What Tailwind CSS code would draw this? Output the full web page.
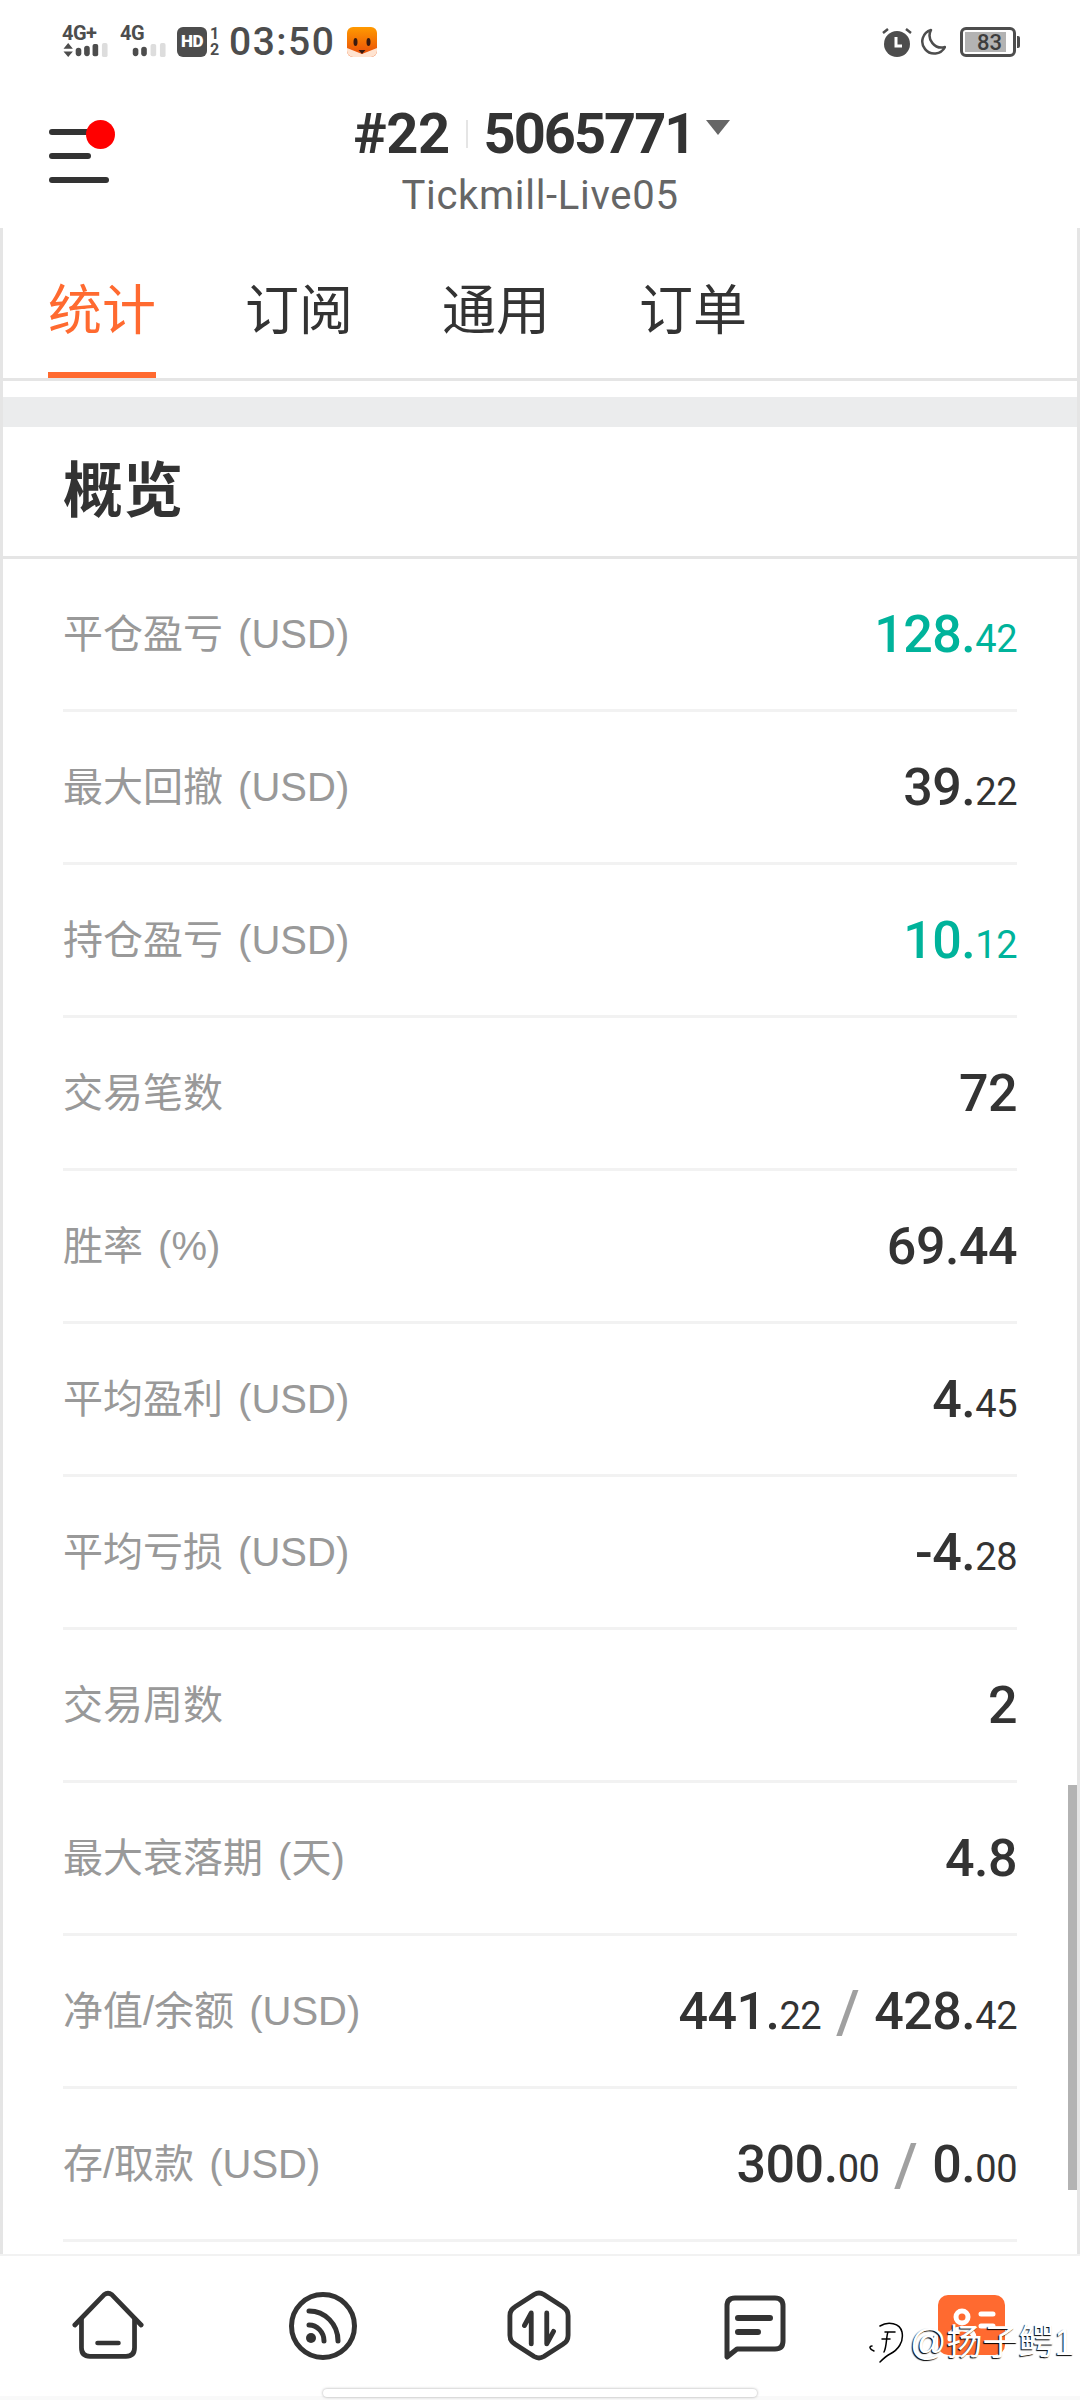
<!DOCTYPE html>
<html lang="zh-CN">
<head>
	<meta charset="UTF-8">
	<meta name="viewport" content="width=device-width, initial-scale=1.0">
	<title>概览</title>
	<script src="https://cdn.jsdelivr.net/npm/@tailwindcss/browser@4"></script>
</head>
<body class="bg-white">
<div class="relative w-[1080px] h-[2400px] overflow-hidden flex flex-col bg-white text-[#333] font-['Roboto','Noto_Sans_CJK_SC',sans-serif]">

	<!-- status bar -->
	<div class="h-[70px] shrink-0 flex items-start justify-between pl-[62px] pr-[60px] pt-[24px] text-[#4d4d4d]">
		<div class="flex items-start">
			<div class="w-[48px] h-[34px] flex flex-col">
				<span class="text-[20px] leading-[18px] font-bold tracking-[-0.5px]">4G+</span>
				<svg class="mt-[1px]" width="48" height="16" viewBox="0 0 48 16"><path d="M0 6 5 0l5 6zM0 9h10l-5 6z" fill="#4d4d4d"/><rect x="13" y="5" width="6" height="9" rx="3" fill="#4d4d4d"/><rect x="22" y="3" width="6" height="11" rx="3" fill="#4d4d4d"/><rect x="31" y="1" width="6" height="13" rx="2" fill="#4d4d4d"/><rect x="41" y="0" width="6" height="15" rx="2" fill="#ddd"/></svg>
			</div>
			<div class="ml-[10px] w-[48px] h-[34px] flex flex-col">
				<span class="text-[20px] leading-[18px] font-bold tracking-[-0.5px]">4G</span>
				<svg class="mt-[1px]" width="48" height="16" viewBox="0 0 48 16"><rect x="12" y="5" width="6" height="9" rx="3" fill="#4d4d4d"/><rect x="21" y="4" width="6" height="10" rx="3" fill="#4d4d4d"/><rect x="31" y="1" width="6" height="13" rx="2" fill="#ddd"/><rect x="41" y="0" width="6" height="15" rx="2" fill="#ddd"/></svg>
			</div>
			<div class="ml-[9px] mt-[3px] w-[30px] h-[30px] rounded-[6px] bg-[#4d4d4d] text-white text-[17px] font-black flex items-center justify-center tracking-[-0.5px]">HD</div>
			<div class="ml-[2px] mt-[2px] w-[11px] flex flex-col items-center text-[16px] leading-[16px] font-bold"><span>1</span><span>2</span></div>
			<span class="ml-[9px] text-[39px] leading-[38px] mt-[-1px] font-medium tracking-[1.5px]">03:50</span>
			<svg class="ml-[12px] mt-[3px]" width="30" height="30" viewBox="0 0 30 30">
				<defs><linearGradient id="fox" x1="0" y1="0" x2="0" y2="1"><stop offset="0" stop-color="#ff9a00"/><stop offset="1" stop-color="#e8480a"/></linearGradient></defs>
				<rect width="30" height="30" rx="6" fill="url(#fox)"/>
				<path d="M0 21 15 27 30 21v3a6 6 0 0 1-6 6H6a6 6 0 0 1-6-6z" fill="#ffe3d0"/>
				<ellipse cx="8.500" cy="15" rx="2" ry="4" fill="#3a1a10"/><ellipse cx="21.500" cy="15" rx="2" ry="4" fill="#3a1a10"/>
				<path d="M11.500 23h7L15 27z" fill="#3a1a10"/>
			</svg>
		</div>
		<div class="flex items-start -ml-[6px] mr-[4px]">
			<svg class="mt-[3px]" width="30" height="30" viewBox="0 0 30 30"><circle cx="15" cy="17" r="13" fill="#4d4d4d"/><path d="M1 6l5-4M29 6l-5-4" stroke="#4d4d4d" stroke-width="2.500"/><path d="M14 10v9h6" stroke="#fff" stroke-width="3" fill="none"/></svg>
			<svg class="ml-[6px] mt-[4px]" width="28" height="28" viewBox="0 0 28 28"><path d="M13 2A12 12 0 1 0 27 19 12 12 0 0 1 13 2z" fill="none" stroke="#4d4d4d" stroke-width="2.500" stroke-linejoin="round"/></svg>
			<div class="ml-[14px] mt-[3px] relative w-[56px] h-[30px] rounded-[6px] border-[3px] border-[#4d4d4d] p-[2px]">
				<div class="w-[41px] h-full bg-[#b3b3b3]"></div>
				<span class="absolute inset-0 flex items-center justify-end pr-[11px] text-[22px] font-medium text-[#3d3d3d]">83</span>
				<div class="absolute right-[-7px] top-[6px] w-[3px] h-[12px] bg-[#4d4d4d] rounded-r-[2px]"></div>
			</div>
		</div>
	</div>

	<!-- title bar -->
	<div class="relative h-[158px] shrink-0">
		<div class="absolute left-[49px] top-[59px] flex flex-col gap-[18px]">
			<div class="w-[56px] h-[6px] rounded-full bg-[#333]"></div>
			<div class="w-[42px] h-[6px] rounded-full bg-[#333]"></div>
			<div class="w-[60px] h-[6px] rounded-full bg-[#333]"></div>
		</div>
		<div class="absolute left-[86px] top-[50px] w-[29px] h-[29px] rounded-full bg-[#ff0000]"></div>
		<div class="flex flex-col items-center pt-[34px]">
			<div class="flex items-center h-[60px] leading-[60px] pl-[4px]">
				<span class="text-[56px] font-bold tracking-[-0.5px]">#22</span>
				<span class="w-[2px] h-[28px] bg-[#e5e5e5] mx-[16px]"></span>
				<span class="text-[56px] font-bold tracking-[-2px]">5065771</span>
				<svg class="ml-[12px] mt-[-14px]" width="24" height="15" viewBox="0 0 24 15"><path d="M0 0h24L12 15z" fill="#666"/></svg>
			</div>
			<span class="mt-[10px] text-[40px] leading-[44px] tracking-[0.7px] text-[#666]">Tickmill-Live05</span>
		</div>
	</div>

	<!-- scroll area -->
	<div class="relative flex-1 min-h-0 flex flex-col border-x-[3px] border-[#e5e5e5] overflow-hidden">
		<div class="h-[153px] shrink-0 flex items-end gap-[89px] pl-[45px] border-b-[3px] border-[#e5e5e5]">
			<div class="w-[108px] h-[144px] flex items-start justify-center pt-[45px] border-b-[6px] border-[#ff6a30] text-[54px] leading-[66px] text-[#ff6a30]">统计</div>
			<div class="h-[144px] pt-[45px] text-[54px] leading-[66px]">订阅</div>
			<div class="h-[144px] pt-[45px] text-[54px] leading-[66px]">通用</div>
			<div class="h-[144px] pt-[45px] text-[54px] leading-[66px]">订单</div>
		</div>
		<div class="h-[16px] shrink-0"></div>
		<div class="h-[30px] shrink-0 bg-[#ebeced]"></div>
		<div class="h-[132px] shrink-0 flex items-center pl-[60px] border-b-[3px] border-[#e5e5e5] text-[60px] font-bold">概览</div>

		<div class="flex flex-col pl-[60px] pr-[60px] text-[40px] text-[#999] [word-spacing:4px] font-['Liberation_Sans','Noto_Sans_CJK_SC',sans-serif]">
			<div class="h-[153px] shrink-0 flex items-center justify-between border-b-[3px] border-[#f2f2f2]">
				<span>平仓盈亏 (USD)</span>
				<span class="pt-[2px] font-['Roboto',sans-serif] font-medium text-[52px] tracking-[-0.5px] text-[#00b39b]">128.<span class="text-[38px] font-normal">42</span></span>
			</div>
			<div class="h-[153px] shrink-0 flex items-center justify-between border-b-[3px] border-[#f2f2f2]">
				<span>最大回撤 (USD)</span>
				<span class="pt-[2px] font-['Roboto',sans-serif] font-medium text-[52px] tracking-[-0.5px] text-[#333]">39.<span class="text-[38px] font-normal">22</span></span>
			</div>
			<div class="h-[153px] shrink-0 flex items-center justify-between border-b-[3px] border-[#f2f2f2]">
				<span>持仓盈亏 (USD)</span>
				<span class="pt-[2px] font-['Roboto',sans-serif] font-medium text-[52px] tracking-[-0.5px] text-[#00b39b]">10.<span class="text-[38px] font-normal">12</span></span>
			</div>
			<div class="h-[153px] shrink-0 flex items-center justify-between border-b-[3px] border-[#f2f2f2]">
				<span>交易笔数</span>
				<span class="pt-[2px] font-['Roboto',sans-serif] font-medium text-[52px] tracking-[-0.5px] text-[#333]">72</span>
			</div>
			<div class="h-[153px] shrink-0 flex items-center justify-between border-b-[3px] border-[#f2f2f2]">
				<span>胜率 (%)</span>
				<span class="pt-[2px] font-['Roboto',sans-serif] font-medium text-[52px] tracking-[-0.5px] text-[#333]">69.44</span>
			</div>
			<div class="h-[153px] shrink-0 flex items-center justify-between border-b-[3px] border-[#f2f2f2]">
				<span>平均盈利 (USD)</span>
				<span class="pt-[2px] font-['Roboto',sans-serif] font-medium text-[52px] tracking-[-0.5px] text-[#333]">4.<span class="text-[38px] font-normal">45</span></span>
			</div>
			<div class="h-[153px] shrink-0 flex items-center justify-between border-b-[3px] border-[#f2f2f2]">
				<span>平均亏损 (USD)</span>
				<span class="pt-[2px] font-['Roboto',sans-serif] font-medium text-[52px] tracking-[-0.5px] text-[#333]">-4.<span class="text-[38px] font-normal">28</span></span>
			</div>
			<div class="h-[153px] shrink-0 flex items-center justify-between border-b-[3px] border-[#f2f2f2]">
				<span>交易周数</span>
				<span class="pt-[2px] font-['Roboto',sans-serif] font-medium text-[52px] tracking-[-0.5px] text-[#333]">2</span>
			</div>
			<div class="h-[153px] shrink-0 flex items-center justify-between border-b-[3px] border-[#f2f2f2]">
				<span>最大衰落期 (天)</span>
				<span class="pt-[2px] font-['Roboto',sans-serif] font-medium text-[52px] tracking-[-0.5px] text-[#333]">4.8</span>
			</div>
			<div class="h-[153px] shrink-0 flex items-center justify-between border-b-[3px] border-[#f2f2f2]">
				<span>净值/余额 (USD)</span>
				<span class="pt-[2px] font-['Roboto',sans-serif] font-medium text-[52px] tracking-[-0.5px] text-[#333] flex items-center">441.<span class="text-[38px] font-normal mt-[8px]">22</span><span class="mx-[15px] text-[60px] leading-[60px] text-[#a0a0a0]">/</span>428.<span class="text-[38px] font-normal mt-[8px]">42</span></span>
			</div>
			<div class="h-[153px] shrink-0 flex items-center justify-between border-b-[3px] border-[#f2f2f2]">
				<span>存/取款 (USD)</span>
				<span class="pt-[2px] font-['Roboto',sans-serif] font-medium text-[52px] tracking-[-0.5px] text-[#333] flex items-center">300.<span class="text-[38px] font-normal mt-[8px]">00</span><span class="mx-[15px] text-[60px] leading-[60px] text-[#a0a0a0]">/</span>0.<span class="text-[38px] font-normal mt-[8px]">00</span></span>
			</div>
		</div>

		<!-- scrollbar -->
		<div class="absolute right-[0px] top-[1557px] w-[9px] h-[405px] bg-[#b3b3b3]"></div>
	</div>

	<!-- tab bar -->
	<div class="relative h-[146px] shrink-0 border-t-[2px] border-[#f2f2f2] bg-white">
		<div class="h-[134px] flex items-start">
			<div class="w-[215px] flex justify-center pt-[34px]">
				<svg width="72" height="70" viewBox="0 0 76 72" fill="none" stroke="#333" stroke-width="5" stroke-linecap="round" stroke-linejoin="round"><path d="M3 36 34 4q4-3 8 0l31 32"/><path d="M10 30v30q0 9 9 9h38q9 0 9-9V30"/><path d="M27 55h22"/></svg>
			</div>
			<div class="w-[216px] flex justify-center pt-[36px]">
				<svg width="68" height="68" viewBox="0 0 68 68" fill="none" stroke="#333" stroke-width="5" stroke-linecap="round"><circle cx="34" cy="34" r="31.500"/><path d="M20 19c16 0 29 13 29 30"/><path d="M20 33c8 0 15 7 15 16"/><circle cx="22" cy="46" r="5" fill="#333" stroke="none"/></svg>
			</div>
			<div class="w-[216px] flex justify-center pt-[34px]">
				<svg width="64" height="71" viewBox="0 0 66 72" fill="none" stroke="#333" stroke-width="5" stroke-linecap="round" stroke-linejoin="round"><path d="M28 4q5-3 10 0l20 13q5 3 5 9v20q0 6-5 9L38 68q-5 3-10 0L8 55q-5-3-5-9V26q0-6 5-9z"/><path d="M25 55V23l-7 13M41 23v32l7-13"/></svg>
			</div>
			<div class="w-[215px] flex justify-center pt-[39px]">
				<svg width="62" height="66" viewBox="0 0 62 66" fill="none" stroke="#333" stroke-width="5" stroke-linecap="round" stroke-linejoin="round"><path d="M3 62V11q0-8 8-8h40q8 0 8 8v35q0 8-8 8H13z"/><path d="M14 23h32M14 37h20" stroke-width="6"/></svg>
			</div>
			<div class="w-[218px] flex justify-center pt-[39px]">
				<div class="w-[67px] h-[60px] rounded-[10px] bg-[#ff6a30]">
					<svg width="67" height="60" viewBox="0 0 67 60" fill="none" stroke="#fff" stroke-width="5" stroke-linecap="round"><circle cx="24" cy="22" r="6"/><path d="M12 44q0-10 12-10t12 10M43 19h12M43 31h12"/></svg>
				</div>
			</div>
		</div>
		<div class="absolute left-0 right-0 bottom-0 h-[4px] bg-[#f9f9f9]"></div>
		<div class="absolute left-[323px] bottom-[3px] w-[434px] h-[8px] rounded-full bg-white shadow-[0_0_3px_rgba(0,0,0,0.35)]"></div>
	</div>

	<!-- watermark -->
	<div class="absolute left-[868px] top-[2322px] flex items-center whitespace-nowrap">
		<svg width="36" height="42" viewBox="0 0 36 42" fill="none" stroke="#000" stroke-width="1.500" stroke-linecap="round"><path d="M12 4c8-5 20-3 22 6 2 10-4 18-12 22-4 2-8 6-10 8"/><path d="M4 24c-3 0-3 3 2 5"/><path d="M17 10h10M20 10c-2 5-1 14-4 20M14 17h8"/></svg>
		<span class="ml-[6px] text-[36px] leading-[42px] text-white font-['Liberation_Sans','Noto_Sans_CJK_SC',sans-serif] [text-shadow:-1px_1px_1px_#000]">@扬子鳄1</span>
	</div>
</div>
</body>
</html>
